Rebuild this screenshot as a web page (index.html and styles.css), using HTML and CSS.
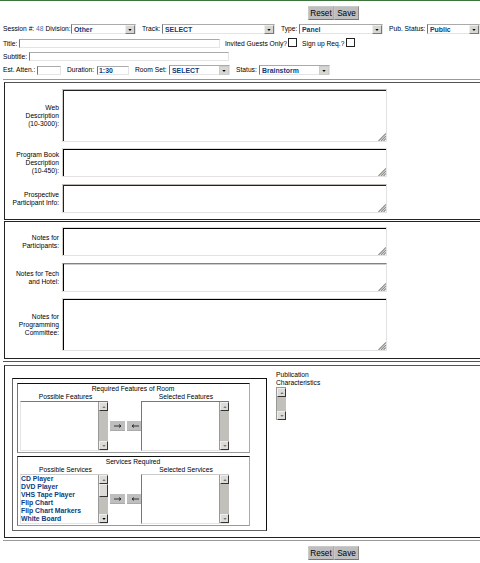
FILE: index.html
```html
<!DOCTYPE html>
<html lang="en">
<head>
<meta charset="utf-8">
<title>Edit Session</title>
<link rel="stylesheet" href="styles.css">
</head>
<body>
<svg class="defs" width="0" height="0">
  <symbol id="grip" viewBox="0 0 8 8"><path d="M.5 8 8 .5M3 8 8 3M5.5 8 8 5.5" stroke="#8f8c86" stroke-width="1.2" fill="none"/></symbol>
  <symbol id="down" viewBox="0 0 5 3"><path d="M0 0h5L2.5 3z"/></symbol>
  <symbol id="up" viewBox="0 0 5 3"><path d="M0 3h5L2.5 0z"/></symbol>
  <symbol id="right" viewBox="0 0 8 4"><path d="M0 2h7M5 .5 7 2 5 3.5" stroke="#111" stroke-width=".8" fill="none"/></symbol>
  <symbol id="left" viewBox="0 0 8 4"><path d="M8 2H1M3 .5 1 2 3 3.5" stroke="#111" stroke-width=".8" fill="none"/></symbol>
</svg>
<div class="actions"><span class="btn reset">Reset</span><span class="btn save">Save</span></div>

<div class="row row-main">
  <span>Session #: <span class="num">48</span> Division:</span>
  <div class="select">Other<i><svg><use href="#down"/></svg></i></div>
  <span>Track:</span>
  <div class="select">SELECT<i><svg><use href="#down"/></svg></i></div>
  <span>Type:</span>
  <div class="select">Panel<i><svg><use href="#down"/></svg></i></div>
  <span>Pub. Status:</span>
  <div class="select">Public<i><svg><use href="#down"/></svg></i></div>
</div>
<div class="row row-title">
  <span>Title:</span><div class="input"></div>
  <span>Invited Guests Only?</span><div class="check"></div>
  <span>Sign up Req.?</span><div class="check"></div>
</div>
<div class="row row-sub"><span>Subtitle:</span><div class="input"></div></div>
<div class="row row-last">
  <span>Est. Atten.:</span><div class="input"></div>
  <span>Duration:</span><div class="input">1:30</div>
  <span>Room Set:</span>
  <div class="select">SELECT<i class="flat"><svg><use href="#down"/></svg></i></div>
  <span>Status:</span>
  <div class="select">Brainstorm<i class="flat"><svg><use href="#down"/></svg></i></div>
</div>

<div class="rule"></div>
<section class="panel texts descriptions">
  <div class="field tall"><label>Web<br>Description<br>(10-3000):</label><div class="area"><svg><use href="#grip"/></svg></div></div>
  <div class="field"><label>Program Book<br>Description<br>(10-450):</label><div class="area black"><svg><use href="#grip"/></svg></div></div>
  <div class="field"><label>Prospective<br>Participant Info:</label><div class="area"><svg><use href="#grip"/></svg></div></div>
</section>
<section class="panel texts notes">
  <div class="field"><label>Notes for<br>Participants:</label><div class="area black"><svg><use href="#grip"/></svg></div></div>
  <div class="field"><label>Notes for Tech<br>and Hotel:</label><div class="area soft"><svg><use href="#grip"/></svg></div></div>
  <div class="field tall"><label>Notes for<br>Programming<br>Committee:</label><div class="area black"><svg><use href="#grip"/></svg></div></div>
</section>
<div class="rule dark"></div>

<section class="panel resources">
  <div class="groups">
    <div class="group">
      <div class="group-title">Required Features of Room</div>
      <div class="heads"><span>Possible Features</span><span>Selected Features</span></div>
      <div class="lists">
        <div class="list"><div class="items"></div><div class="bar"><b><svg><use href="#up"/></svg></b><b><svg><use href="#down"/></svg></b></div></div>
        <span class="move"><svg><use href="#right"/></svg></span><span class="move"><svg><use href="#left"/></svg></span>
        <div class="list second"><div class="items"></div><div class="bar"><b><svg><use href="#up"/></svg></b><b><svg><use href="#down"/></svg></b></div></div>
      </div>
    </div>
    <div class="group">
      <div class="group-title">Services Required</div>
      <div class="heads"><span>Possible Services</span><span>Selected Services</span></div>
      <div class="lists">
        <div class="list light"><div class="items">CD Player<br>DVD Player<br>VHS Tape Player<br>Flip Chart<br>Flip Chart Markers<br>White Board</div><div class="bar active"><b><svg><use href="#up"/></svg></b><em></em><b><svg><use href="#down"/></svg></b></div></div>
        <span class="move"><svg><use href="#right"/></svg></span><span class="move"><svg><use href="#left"/></svg></span>
        <div class="list second light"><div class="items"></div><div class="bar"><b><svg><use href="#up"/></svg></b><b><svg><use href="#down"/></svg></b></div></div>
      </div>
    </div>
  </div>
  <div class="publication">
    <div>Publication<br>Characteristics</div>
    <div class="bar"><b><svg><use href="#up"/></svg></b><b><svg><use href="#down"/></svg></b></div>
  </div>
</section>
<div class="rule bottom"></div>
<div class="actions footer"><span class="btn reset">Reset</span><span class="btn save">Save</span></div>
</body>
</html>
```
FILE: styles.css
```css
* { box-sizing: border-box; }
body {
  margin: 0;
  height: 563px;
  overflow: hidden;
  background: #fff;
  border-top: 1px solid #3d733d;
  font: 6.7px/8px "Liberation Sans", Arial, sans-serif;
  color: #000;
}
.defs { position: absolute; }
svg { display: block; }

.actions { display: flex; height: 14px; margin: 5px 0 0 308px; }
.btn {
  height: 14px;
  background: #bebebe;
  border: 1px solid #c9c9c9;
  border-right-color: #8a8a8a;
  border-bottom-color: #777;
  font-size: 8.2px;
  line-height: 13px;
  text-align: center;
  color: #000;
}
.reset { width: 26px; border-right-color: #aaa; }
.save { width: 25px; }

.row { display: grid; align-items: center; padding-left: 3px; white-space: nowrap; }
.row-main { height: 10px; margin-top: 4px; grid-template-columns: 68px 65px 26px 113px 24px 84px 44px 53px; }
.row-main > span, .row-last > span { padding-right: 2px; }
.row-main > span:nth-of-type(n+2) { padding-left: 6px; }
.row-title { height: 10px; margin-top: 4px; grid-template-columns: 16px 201px 68px 8px 50px 9px; }
.row-title > span { padding-top: 1px; }
.row-title > span:nth-of-type(2) { padding-left: 5px; }
.row-title > span:nth-of-type(3) { padding-left: 6px; }
.row-sub { height: 9px; margin-top: 4px; grid-template-columns: 26px 200px; }
.row-last { height: 10px; margin-top: 4px; grid-template-columns: 34px 24px 36px 32px 40px 61px 29px 71px; }
.row-last > span:nth-of-type(n+2) { padding-left: 6px; }
.num { color: #3976ad; }

.select, .input {
  border: 1px solid #e4e4e4;
  border-top-color: #aaa;
  border-left-color: #777;
  font-weight: bold;
  font-size: 6.9px;
  color: #0c3b7c;
}
.select { display: flex; justify-content: space-between; height: 10px; padding-left: 2px; line-height: 9px; }
.select i {
  width: 10px;
  height: 9px;
  background: #d8d6d1;
  border: 1px solid #eee;
  border-right-color: #777;
  border-bottom-color: #777;
  display: grid;
  place-items: center;
}
.select i.flat { border-color: #ccc; }
.select i svg { width: 4px; height: 2px; }
.input { height: 9px; padding-left: 1px; line-height: 8px; }
.check { width: 9px; height: 9px; margin-top: -2px; border: 1px solid #222; }

.rule { height: 1px; margin: 4px 0 0 3px; background: #999; }
.panel { margin-left: 4px; border: solid #222; border-width: 1px 0 1px 1px; }
.texts { height: 138px; display: flex; flex-direction: column; gap: 7px; }
.descriptions { margin-top: 2px; padding-top: 6px; border-top-color: #555; }
.notes { margin-top: 1px; padding-top: 5px; }
.field { display: grid; grid-template-columns: 54px 325px; gap: 3px; align-items: center; height: 29px; }
.field.tall { height: 53px; }
.descriptions .field.tall { margin-bottom: -1px; }
.notes .field.tall { margin-top: -1px; }
.field label { text-align: right; white-space: nowrap; }
.area {
  height: 100%;
  border: 1px solid #e2e2e2;
  border-top-color: #bab8b0;
  border-left-color: #d0cec6;
  box-shadow: inset 1px 1px #222;
  display: flex;
  justify-content: flex-end;
  align-items: flex-end;
}
.area.black { border-top-color: #ddd; box-shadow: inset 1px 1px #000; }
.area.soft { border-top-color: #85827a; box-shadow: inset 1px 0 #000, inset 0 1px #ccc; }
.area svg { width: 8px; height: 8px; }
.rule.dark { margin-top: 2px; background: #555; }

.resources { margin-top: 3px; height: 173px; display: flex; align-items: flex-start; border-top-color: #555; }
.groups {
  width: 255px;
  height: 153px;
  margin: 12px 0 0 7px;
  padding: 4px;
  border: 1px solid #111;
  border-left-color: #666;
  border-bottom-color: #666;
  display: flex;
  flex-direction: column;
  gap: 3px;
}
.group {
  width: 233px;
  height: 70px;
  border: 1px solid #111;
  border-left-color: #777;
  border-right-color: #aaa;
  border-bottom-color: #999;
}
.group-title { padding-top: 1px; height: 9px; padding-right: 1px; text-align: center; }
.heads { display: grid; grid-template-columns: 94px 146px; height: 8px; text-align: center; }
.heads span:first-child { padding-left: 1px; }
.heads span:last-child { padding-left: 2px; }
.lists { display: flex; padding-left: 2px; }
.list {
  width: 88px;
  height: 50px;
  display: flex;
  border: 1px solid #e4e4e4;
  border-top-color: #777;
  border-right: 0;
}
.list.second { border-left-color: #777; }
.list.light { border-top-color: #ccc; }
.items { flex: 1; font-weight: bold; font-size: 6.85px; color: #0c3b7c; white-space: nowrap; }
.bar {
  width: 10px;
  display: flex;
  flex-direction: column;
  justify-content: space-between;
  background: #c1c0bb;
  border-left: 1px solid #999;
}
.bar b, .bar em {
  height: 9px;
  background: #dddbd7;
  border: 1px solid #eee;
  border-right-color: #333;
  border-bottom-color: #333;
  display: grid;
  place-items: center;
}
.bar svg { width: 4px; height: 2px; fill: #777; }
.active em { height: 13px; margin-bottom: auto; }
.active b:last-child svg { fill: #000; }
.move {
  width: 15px;
  height: 10px;
  margin: 20px 0 0 2px;
  background: #bebebe;
  border-bottom: 1px solid #aaa;
  display: grid;
  place-items: center;
}
.move svg { width: 8px; height: 4px; }
.move + .list { margin-left: -1px; }
.publication { margin: 5px 0 0 9px; }
.publication > .bar { height: 33px; border-top: 1px solid #999; }
.rule.bottom { margin-top: 2px; }
.footer { margin-top: 5px; }
```
